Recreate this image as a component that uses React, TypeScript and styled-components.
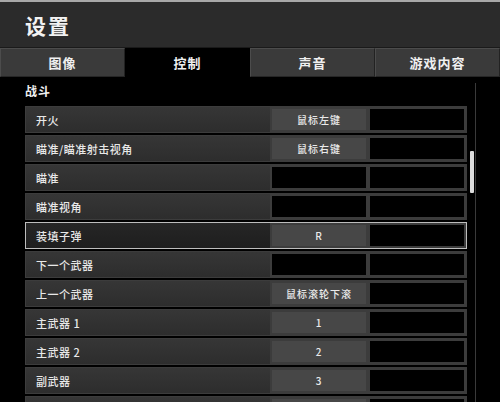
import React from 'react'
import styled, { createGlobalStyle } from 'styled-components'

const GlobalStyle = createGlobalStyle`
  html, body {
    margin: 0;
    padding: 0;
    background: #000;
  }
  body {
    font-family: "Noto Sans CJK SC", "Noto Sans", "Liberation Sans", sans-serif;
    color: #e6e6e6;
  }
`

const Screen = styled.div`
  width: 500px;
  height: 402px;
  overflow: hidden;
  background: #000;
  display: flex;
  flex-direction: column;
`

const TitleBar = styled.div`
  height: 45px;
  flex-shrink: 0;
  border-top: 2px solid #a8a8a8;
  border-bottom: 1px solid #1a1a1a;
  background: #2b2b2b;
  display: flex;
  align-items: center;
  padding-left: 25px;
`

const Title = styled.h1`
  margin: 0;
  font-size: 21px;
  font-weight: 700;
  letter-spacing: 2px;
  color: #f2f2f2;
`

const Tabs = styled.div`
  display: flex;
  height: 29px;
  flex-shrink: 0;
  background: #000;
`

const Tab = styled.div<{ active?: boolean }>`
  flex: 1;
  display: flex;
  align-items: center;
  justify-content: center;
  font-size: 13px;
  font-weight: 700;
  letter-spacing: 1px;
  color: #f0f0f0;
  background: ${props => (props.active ? '#000' : '#3a3a3a')};
  border: 1px solid ${props => (props.active ? '#000' : '#4c4c4c')};
  border-right-color: ${props => (props.active ? '#000' : '#222')};
  border-bottom-color: ${props => (props.active ? '#000' : '#262626')};
`

const Body = styled.div`
  flex: 1;
  display: flex;
  padding-left: 25px;
  gap: 3px;
  overflow: hidden;
`

const List = styled.div`
  width: 442px;
  display: flex;
  flex-direction: column;
`

const SectionTitle = styled.div`
  height: 29px;
  flex-shrink: 0;
  display: flex;
  align-items: center;
  font-size: 12px;
  font-weight: 700;
  letter-spacing: 1px;
  color: #f0f0f0;
  padding-bottom: 2px;
  box-sizing: border-box;
`

const Row = styled.div<{ selected?: boolean }>`
  display: flex;
  height: 27px;
  flex-shrink: 0;
  margin-bottom: 2px;
  box-sizing: border-box;
  border: 1px solid ${props => (props.selected ? '#bdbdbd' : '#3c3c3c')};
  background: #3a3a3a;
`

const Label = styled.div<{ selected?: boolean }>`
  flex: 1;
  display: flex;
  align-items: center;
  padding-left: 10px;
  font-size: 11px;
  font-weight: 500;
  letter-spacing: 0.5px;
  color: #e8e8e8;
  background: ${props =>
    props.selected ? 'linear-gradient(#262626, #1e1e1e)' : 'linear-gradient(#363636, #2d2d2d)'};
`

const Key = styled.div<{ bound?: boolean }>`
  width: 98px;
  box-sizing: border-box;
  display: flex;
  align-items: center;
  justify-content: center;
  border: 2px solid #3c3c3c;
  background: ${props => (props.bound ? '#474747' : '#000')};
  font-size: 10px;
  font-weight: 500;
  letter-spacing: 1px;
  color: #eaeaea;
`

const ScrollTrack = styled.div`
  width: 5px;
  margin-top: 6px;
  border-right: 1px solid #3a3a3a;
  display: flex;
  flex-direction: column;
`

const ScrollThumb = styled.div`
  width: 4px;
  height: 42px;
  margin-top: 68px;
  background: #dcdcdc;
  border-radius: 1px;
`

const tabs = ['图像', '控制', '声音', '游戏内容']

// the last row is only peeking in at the bottom edge, so it shows no text
const bindings: Array<{ label: string; primary?: string; selected?: boolean }> = [
  { label: '开火', primary: '鼠标左键' },
  { label: '瞄准/瞄准射击视角', primary: '鼠标右键' },
  { label: '瞄准' },
  { label: '瞄准视角' },
  { label: '装填子弹', primary: 'R', selected: true },
  { label: '下一个武器' },
  { label: '上一个武器', primary: '鼠标滚轮下滚' },
  { label: '主武器 1', primary: '1' },
  { label: '主武器 2', primary: '2' },
  { label: '副武器', primary: '3' },
  { label: '', primary: ' ' },
]

export default function App() {
  return (
    <Screen>
      <GlobalStyle />
      <TitleBar>
        <Title>设置</Title>
      </TitleBar>
      <Tabs>
        {tabs.map((t, i) => (
          <Tab key={t} active={i === 1}>
            {t}
          </Tab>
        ))}
      </Tabs>
      <Body>
        <List>
          <SectionTitle>战斗</SectionTitle>
          {bindings.map((b, i) => (
            <Row key={i} selected={b.selected}>
              <Label selected={b.selected}>{b.label}</Label>
              <Key bound={!!b.primary}>{b.primary}</Key>
              <Key />
            </Row>
          ))}
        </List>
        <ScrollTrack>
          <ScrollThumb />
        </ScrollTrack>
      </Body>
    </Screen>
  )
}
